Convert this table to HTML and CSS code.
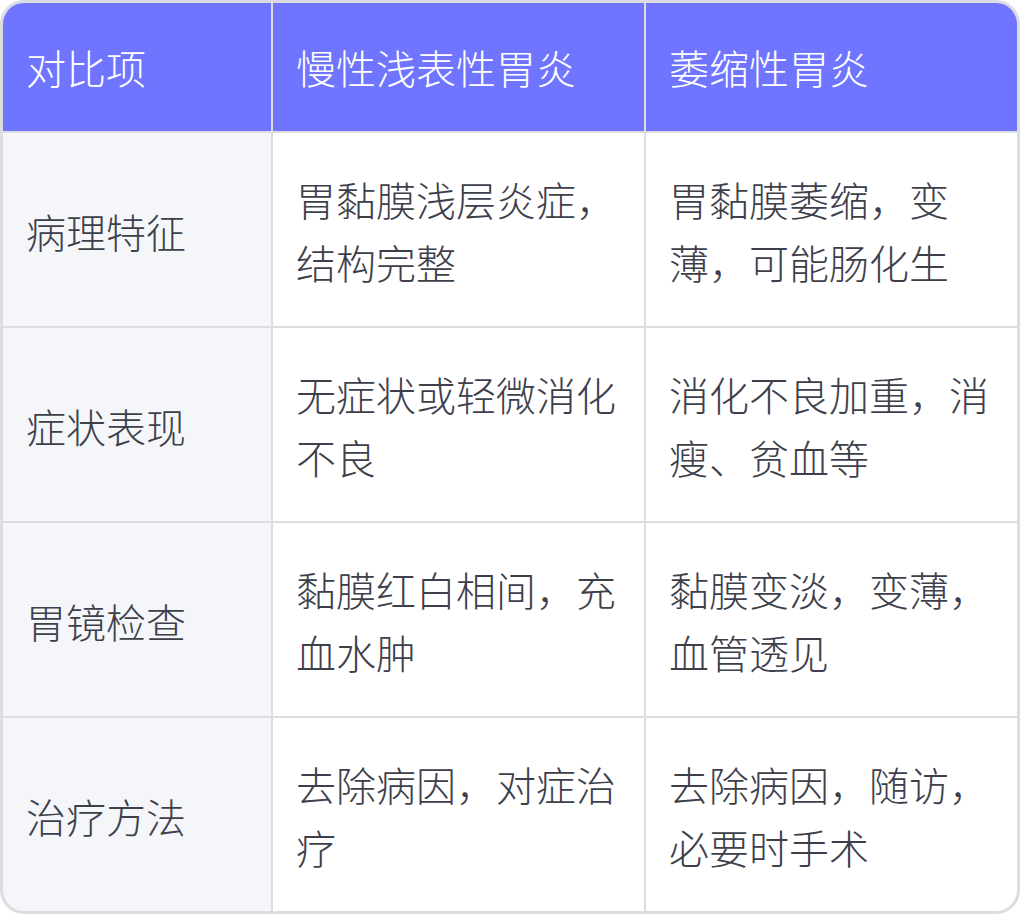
FILE: index.html
```html
<!DOCTYPE html>
<html lang="zh-CN">
<head>
<meta charset="utf-8">
<title>慢性浅表性胃炎与萎缩性胃炎对比</title>
<link rel="stylesheet" href="styles.css">
</head>
<body>
<div class="table">
  <div class="cell head">对比项</div>
  <div class="cell head">慢性浅表性胃炎</div>
  <div class="cell head">萎缩性胃炎</div>

  <div class="cell label">病理特征</div>
  <div class="cell">胃黏膜浅层炎症，结构完整</div>
  <div class="cell">胃黏膜萎缩，变薄，可能肠化生</div>

  <div class="cell label">症状表现</div>
  <div class="cell">无症状或轻微消化不良</div>
  <div class="cell">消化不良加重，消瘦、贫血等</div>

  <div class="cell label">胃镜检查</div>
  <div class="cell">黏膜红白相间，充血水肿</div>
  <div class="cell">黏膜变淡，变薄，血管透见</div>

  <div class="cell label">治疗方法</div>
  <div class="cell">去除病因，对症治疗</div>
  <div class="cell">去除病因，随访，必要时手术</div>
</div>
</body>
</html>
```

FILE: styles.css
```css
html, body {
  margin: 0;
  padding: 0;
  background: #ffffff;
}

.table {
  width: 1020px;
  box-sizing: border-box;
  display: grid;
  grid-template-columns: 268px 1fr 1fr;
  grid-template-rows: 128px 193px 193px 193px 193px;
  gap: 2px;
  background: #dcdde2;
  border: 3px solid #dcdde2;
  border-radius: 24px;
  overflow: hidden;
  font-family: "Noto Sans CJK SC", "Noto Sans", sans-serif;
  font-size: 40px;
  font-weight: 300;
  line-height: 63px;
  color: #3d404b;
}

.cell {
  background: #ffffff;
  padding: 3px 22px 0 23px;
  display: flex;
  align-items: center;
  word-break: break-all;
}

.head {
  background: #7075ff;
  color: #ffffff;
  padding-top: 0;
}

.label {
  background: #f5f6fa;
}
```
